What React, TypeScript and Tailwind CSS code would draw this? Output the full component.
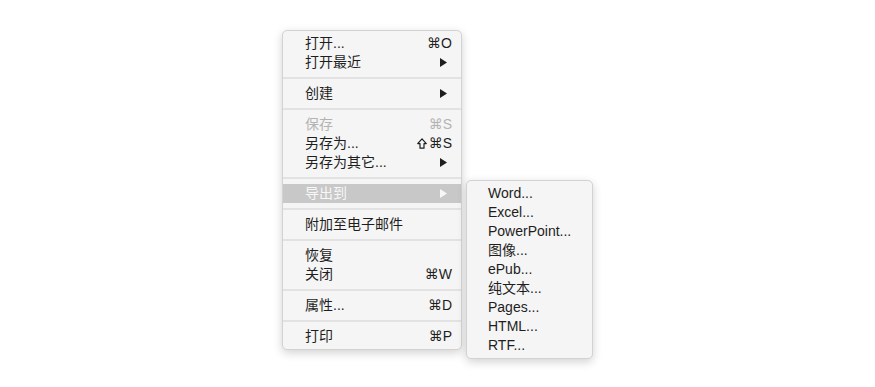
import React from 'react';

type Item =
  | { kind: 'sep' }
  | { kind: 'item'; label: string; shortcut?: string; shift?: boolean; submenu?: boolean; disabled?: boolean; active?: boolean };

const mainMenu: Item[] = [
  { kind: 'item', label: '打开...', shortcut: '⌘O' },
  { kind: 'item', label: '打开最近', submenu: true },
  { kind: 'sep' },
  { kind: 'item', label: '创建', submenu: true },
  { kind: 'sep' },
  { kind: 'item', label: '保存', shortcut: '⌘S', disabled: true },
  { kind: 'item', label: '另存为...', shortcut: '⌘S', shift: true },
  { kind: 'item', label: '另存为其它...', submenu: true },
  { kind: 'sep' },
  { kind: 'item', label: '导出到', submenu: true, active: true },
  { kind: 'sep' },
  { kind: 'item', label: '附加至电子邮件' },
  { kind: 'sep' },
  { kind: 'item', label: '恢复' },
  { kind: 'item', label: '关闭', shortcut: '⌘W' },
  { kind: 'sep' },
  { kind: 'item', label: '属性...', shortcut: '⌘D' },
  { kind: 'sep' },
  { kind: 'item', label: '打印', shortcut: '⌘P' },
];

const exportMenu = ['Word...', 'Excel...', 'PowerPoint...', '图像...', 'ePub...', '纯文本...', 'Pages...', 'HTML...', 'RTF...'];

const font = "font-['Liberation_Sans','Noto_Sans_CJK_SC',sans-serif]";

const Arrow = () => (
  <svg width="7" height="9" viewBox="0 0 7 9" className="mr-[5px]">
    <path d="M0 0 L7 4.5 L0 9 Z" fill="currentColor" />
  </svg>
);

// outlined shift arrow, wider than the font glyph
const ShiftIcon = () => (
  <svg width="10" height="11" viewBox="0 0 10 11" className="mr-[2px]">
    <path d="M5 0.8 L9.3 5.6 H7 V10.2 H3 V5.6 H0.7 Z" fill="none" stroke="currentColor" strokeWidth="1.2" strokeLinejoin="round" />
  </svg>
);

const MenuRow: React.FC<{ item: Extract<Item, { kind: 'item' }> }> = ({ item }) => {
  const color = item.active ? 'bg-[#c8c8c8] text-[#f7f7f7]' : item.disabled ? 'text-[#b3b3b3]' : 'text-[#1e1e1e]';
  return (
    <div className={`h-[19px] flex items-center justify-between pl-[22px] pr-[9px] ${color}`}>
      <span className="leading-[19px]">{item.label}</span>
      {item.shortcut && (
        <span className="flex items-center leading-[19px] font-['Liberation_Sans','DejaVu_Sans',sans-serif]">
          {item.shift && <ShiftIcon />}
          {item.shortcut}
        </span>
      )}
      {item.submenu && <Arrow />}
    </div>
  );
};

export default function App() {
  return (
    <div className={`w-[875px] h-[387px] bg-white flex items-start pl-[282px] pt-[30px] gap-[4px] text-[14px] ${font}`}>
      {/* Main menu */}
      <div className="w-[180px] bg-[#f5f5f5] border border-[#d2d2d2] rounded-[5px] py-[3px] shadow-[0_3px_10px_rgba(0,0,0,0.18)]">
        {mainMenu.map((item, i) =>
          item.kind === 'sep' ? (
            <div key={i} className="h-[12px] flex items-center">
              <div className="w-full h-[2px] bg-[#e2e2e2]" />
            </div>
          ) : (
            <MenuRow key={i} item={item} />
          )
        )}
      </div>

      {/* Export submenu */}
      <div className="mt-[150px] w-[127px] bg-[#f5f5f5] border border-[#d2d2d2] rounded-[5px] py-[3px] shadow-[0_3px_10px_rgba(0,0,0,0.18)]">
        {exportMenu.map((label) => (
          <div key={label} className="h-[19px] flex items-center pl-[21px] text-[#1e1e1e]">
            <span className="leading-[19px]">{label}</span>
          </div>
        ))}
      </div>
    </div>
  );
}
